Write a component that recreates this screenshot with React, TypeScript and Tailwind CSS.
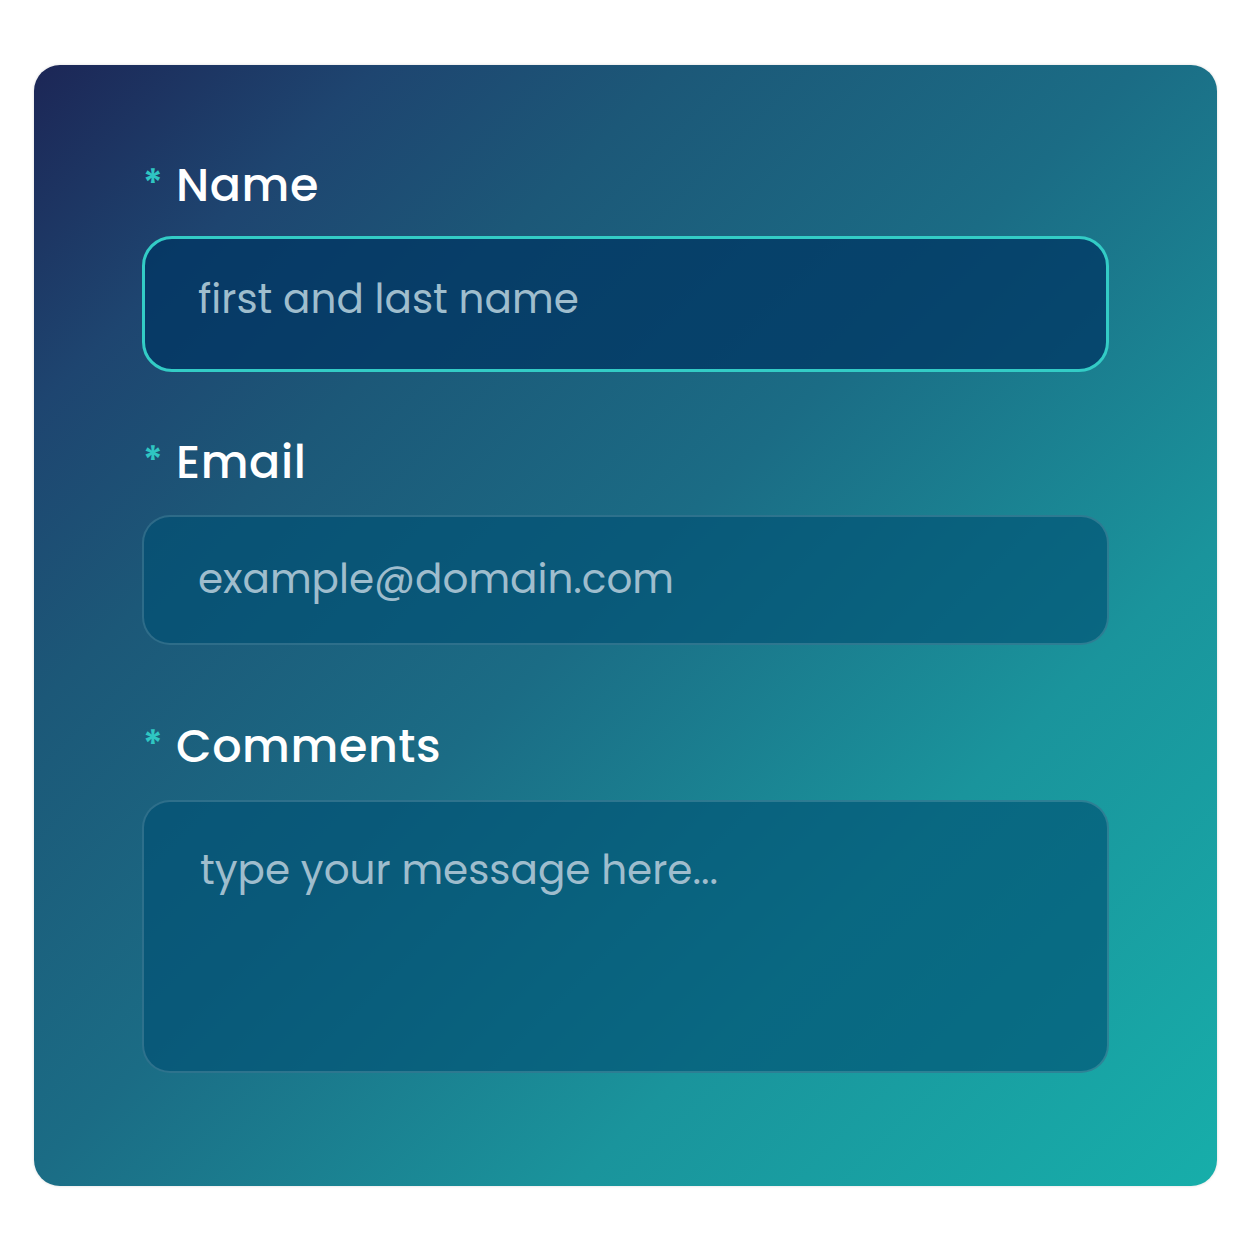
export default function App() {
  const font = { fontFamily: 'Poppins, Inter, "Noto Sans", sans-serif' };
  return (
    <div className="min-h-screen bg-white pt-[65px] pl-[34px]" style={font}>
      <form className="w-[1183px] h-[1121px] rounded-[26px] bg-[linear-gradient(135deg,#1c2656_0%,#1e4570_15%,#1c5878_28%,#1b6c85_48%,#1a949c_72%,#17aeaa_100%)] px-[108px] pt-[96px] shadow-[0_0_3px_rgba(0,0,0,0.15)]">
        <Label text="Name" />
        <input
          type="text"
          placeholder="first and last name"
          className="mt-[27px] block w-full h-[136px] rounded-[30px] border-[3px] border-[#33ccc6] bg-[#003563]/75 px-[53px] pb-[12px] text-[40.5px] text-white outline-none placeholder:text-[#9fbdcd]"
        />
        <div className="mt-[66px]">
          <Label text="Email" />
        </div>
        <input
          type="email"
          placeholder="example@domain.com"
          className="mt-[29px] block w-full h-[130px] rounded-[28px] border-2 border-white/15 bg-[#005073]/65 px-[54px] pb-[4px] text-[40.5px] text-white outline-none placeholder:text-[#9fbdcd]"
        />
        <div className="mt-[77px]">
          <Label text="Comments" />
        </div>
        <textarea
          placeholder="type your message here..."
          className="mt-[30px] block w-full h-[273px] resize-none rounded-[28px] border-2 border-white/15 bg-[#005073]/65 px-[56px] pt-[44px] text-[40.5px] leading-[48px] text-white outline-none placeholder:text-[#9fbdcd]"
        />
      </form>
    </div>
  );
}

function Label({ text }: { text: string }) {
  return (
    <label className="flex items-start h-[48px] leading-[48px]">
      <span className="text-[38px] leading-[38px] font-semibold text-[#2fc6c2] w-[34px] pl-[1px] mt-[4px]">*</span>
      <span className="text-[46px] font-medium text-white tracking-[0.6px]">{text}</span>
    </label>
  );
}
